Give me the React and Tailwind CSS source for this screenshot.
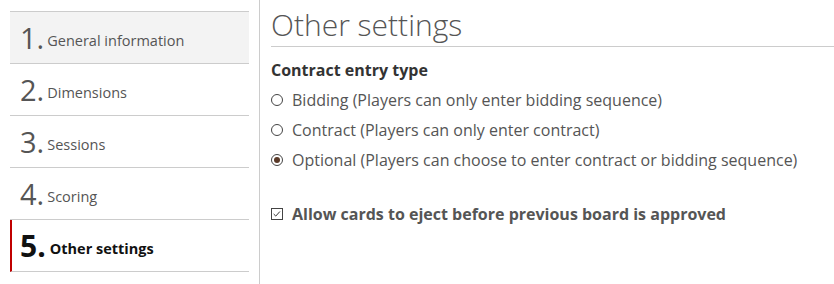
import React from "react";

const steps = [
  { n: "1", label: "General information" },
  { n: "2", label: "Dimensions" },
  { n: "3", label: "Sessions" },
  { n: "4", label: "Scoring" },
  { n: "5", label: "Other settings" },
];

function Radio({ checked }) {
  return (
    <span className="relative inline-block w-[12px] h-[12px] rounded-full border border-[#444] bg-white shrink-0">
      {checked && <span className="absolute left-[2px] top-[2px] w-[6px] h-[6px] rounded-full bg-[#5a3a28]" />}
    </span>
  );
}

export default function App() {
  return (
    <div className="w-[834px] h-[284px] bg-white flex text-[#555]" style={{ fontFamily: '"Open Sans", sans-serif' }}>
      <div className="w-[260px] pl-[10px] pr-[10px] pt-[11px] border-r border-[#ccc] shrink-0">
        {steps.map((s, i) => {
          const active = i === 4;
          const first = i === 0;
          return (
            <div
              key={s.n}
              className={
                "flex items-center border-b border-[#ccc] " +
                (first ? "h-[53px] border-t bg-[#f3f3f3] " : "h-[52px] ") +
                (active ? "border-l-2 border-l-[#c00000] pl-[8px] " : "pl-[10px] ")
              }
            >
              {active ? (
                <>
                  <span className="text-[30px] leading-none font-bold text-[#111]">5.</span>
                  <span className="ml-[4px] mt-[7px] text-[14.5px] font-bold text-[#111]">{s.label}</span>
                </>
              ) : (
                <>
                  <span className="text-[29px] leading-none font-normal text-[#555]">{s.n}.</span>
                  <span className="ml-[3px] mt-[7px] text-[14.5px] text-[#555]">{s.label}</span>
                </>
              )}
            </div>
          );
        })}
      </div>
      <div className="flex-1 pl-[11px]">
        <div className="h-[47px] border-b border-[#ccc] flex items-end">
          <h1 className="text-[30px] leading-none pb-[6px] text-[#555] font-light">Other settings</h1>
        </div>
        <div className="mt-[12px] text-[16px] font-bold text-[#333] leading-[22px]">Contract entry type</div>
        <div className="mt-[8px] flex flex-col gap-[8px] text-[16px] leading-[22px]">
          <label className="flex items-center gap-[9px]"><Radio /><span>Bidding (Players can only enter bidding sequence)</span></label>
          <label className="flex items-center gap-[9px]"><Radio /><span>Contract (Players can only enter contract)</span></label>
          <label className="flex items-center gap-[9px]"><Radio checked /><span>Optional (Players can choose to enter contract or bidding sequence)</span></label>
        </div>
        <label className="mt-[32px] flex items-center gap-[9px] text-[16px] font-bold leading-[22px]">
          <span className="relative inline-block w-[12px] h-[12px] border border-[#444] bg-white shrink-0">
            <svg viewBox="0 0 12 12" className="absolute left-0 top-0 w-[10px] h-[10px]">
              <path d="M2 6 L4.5 8.5 L9.5 3" fill="none" stroke="#333" strokeWidth="1.2" />
            </svg>
          </span>
          <span>Allow cards to eject before previous board is approved</span>
        </label>
      </div>
    </div>
  );
}
